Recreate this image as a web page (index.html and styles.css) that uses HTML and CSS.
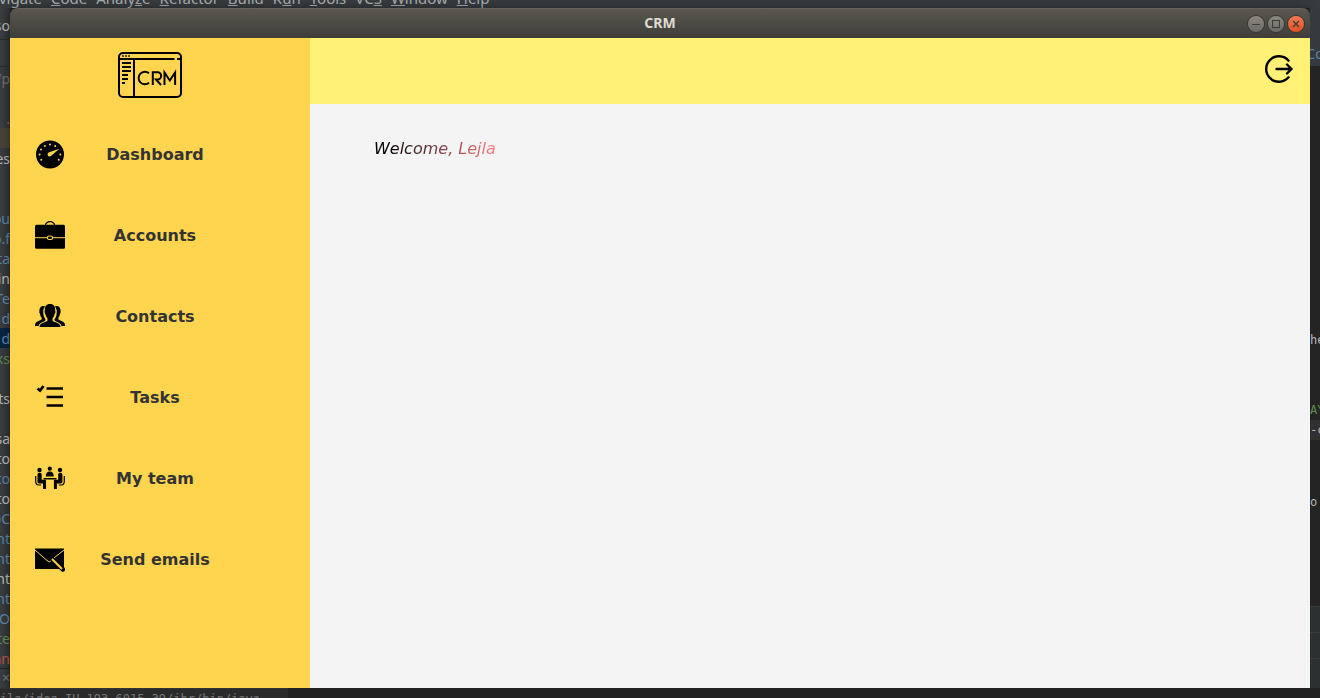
FILE: index.html
```html
<!DOCTYPE html>
<html lang="en">
<head>
<meta charset="utf-8">
<title>CRM</title>
<link rel="stylesheet" href="styles.css">
</head>
<body>
<div class="desktop">
  <div class="ide-menu">
    <span class="cut">Navigate</span><span><u>C</u>ode</span><span>Analy<u>z</u>e</span><span><u>R</u>efactor</span><span><u>B</u>uild</span><span>R<u>u</u>n</span><span><u>T</u>ools</span><span>VC<u>S</u></span><span><u>W</u>indow</span><span><u>H</u>elp</span>
  </div>
  <div class="ide-left">
    <div class="line top">so</div>
    <div class="line crumbs"></div>
    <div class="line path">/p</div>
    <div class="line"></div>
    <div class="line red">.</div>
    <div class="line marked"></div>
    <div class="line">es</div>
    <div class="line"></div>
    <div class="line"></div>
    <div class="line blue">ou</div>
    <div class="line blue">o.f</div>
    <div class="line blue">nta</div>
    <div class="line">in</div>
    <div class="line blue">Te</div>
    <div class="line blue">d</div>
    <div class="line blue selected">d</div>
    <div class="line green">ks</div>
    <div class="line"></div>
    <div class="line">ts</div>
    <div class="line"></div>
    <div class="line">sa</div>
    <div class="line">to</div>
    <div class="line blue">to</div>
    <div class="line">to</div>
    <div class="line blue">oC</div>
    <div class="line blue">nt</div>
    <div class="line blue">nt</div>
    <div class="line">nt</div>
    <div class="line blue">nt</div>
    <div class="line blue">O</div>
    <div class="line green">te</div>
    <div class="line red">nn</div>
    <div class="line close">×</div>
  </div>

  <div class="window">
    <header class="titlebar">
      <h1 class="title">CRM</h1>
      <div class="controls">
        <button class="control" type="button" aria-label="Minimize">
          <svg viewBox="0 0 16 16"><path d="M4 8.500h8" /></svg>
        </button>
        <button class="control" type="button" aria-label="Maximize">
          <svg viewBox="0 0 16 16"><rect x="4.500" y="4.500" width="7" height="7" /></svg>
        </button>
        <button class="control quit" type="button" aria-label="Close">
          <svg viewBox="0 0 16 16"><path d="M5 5l6 6m0-6l-6 6" stroke-width="1.400" /></svg>
        </button>
      </div>
    </header>
    <div class="app">
      <aside class="sidebar">
        <svg class="logo" viewBox="0 0 64 46" role="img" aria-label="CRM">
          <g fill="none" stroke="#000" stroke-width="2">
            <rect x="1" y="1" width="62" height="44" rx="4" />
            <path d="M1 7h55.500M59 7h4M16 7v38" />
            <path d="M4 11h9M4 15h9M4 19h9M4 23h6M4 27h6M4 31h3" />
            <path d="M4 4h2M7 4h2M10 4h2" stroke="#5c4d1c" />
            <path d="M31 21.200a6.300 6.300 0 1 0 0 9.600M34.800 33V20.200h4.700a3.600 3.600 0 0 1 0 7.300H38l5 5.500M46.500 33V20.500l5.300 8 5.300-8V33" />
          </g>
        </svg>
        <nav class="nav">
          <button class="nav-item" type="button">
            <svg class="icon" viewBox="0 0 30 30">
              <circle cx="15" cy="15.500" r="14" />
              <g class="cut-out">
                <path d="M24.500 9.800l-8.300 7a2.100 2.100 0 1 1-2-3.500z" />
                <circle cx="4.600" cy="15.500" r="1" /><circle cx="6" cy="10.500" r="1" /><circle cx="9.800" cy="6.900" r="1" />
                <circle cx="15" cy="5.400" r="1" /><circle cx="20.200" cy="6.900" r="1" /><circle cx="25.300" cy="15.500" r="1" />
                <circle cx="6.300" cy="20.700" r="1" /><circle cx="23.700" cy="20.700" r="1" />
              </g>
            </svg>
            <span class="label">Dashboard</span>
          </button>
          <button class="nav-item" type="button">
            <svg class="icon" viewBox="0 0 30 30">
              <path d="M10.500 5c0-1.500 2-3.300 4.500-3.300S19.500 3.500 19.500 5" fill="none" stroke="#000" stroke-width="1.300" />
              <rect y="4.700" width="30" height="24" rx="1.500" />
              <path class="cut-line" d="M0 17.700h12M18 17.700h12" />
              <rect class="cut-line" x="12.500" y="16" width="5" height="3.500" rx="1.500" stroke-width="1.200" />
            </svg>
            <span class="label">Accounts</span>
          </button>
          <button class="nav-item" type="button">
            <svg class="icon" viewBox="0 0 30 30">
              <path d="M10 5.500C7 4 4 6.500 4.500 10c-.4.500-.2 2 .4 2.500.4 2 .7 3 1.700 4v2L2.500 20.600C.5 21.600 0 22.500 0 25h3.500c.5-2.500 2-3 5.500-4.500 1-.5 1.500-1 1.500-2-1-1.500-2-3.500-2-5C7.800 10.500 8.200 7.500 10 5.500z" />
              <path d="M20 5.500c3-1.500 6 1 5.500 4.500.4.500.2 2-.4 2.500-.4 2-.7 3-1.700 4v2l4.100 2.100c2 1 2.500 1.900 2.500 4.400h-3.500c-.5-2.500-2-3-5.500-4.500-1-.5-1.500-1-1.500-2 1-1.500 2-3.500 2-5 .7-3 .3-6-1.500-8z" />
              <path d="M15 3c-3.700 0-5.600 2.500-5.100 6.500-.7.500-.3 3 .5 3.500.5 2 1.100 3.500 2.100 4.400v2.200C11.500 21.600 4.500 21.500 4.500 26h21c0-4.500-7-4.400-8-6.400v-2.200c1-1 1.600-2.400 2.100-4.400.8-.5 1.200-3 .5-3.500C20.600 5.500 18.700 3 15 3z" />
            </svg>
            <span class="label">Contacts</span>
          </button>
          <button class="nav-item" type="button">
            <svg class="icon" viewBox="0 0 30 30">
              <path d="M11.500 6.500H28M11.500 15H28M11.500 23.500H28" fill="none" stroke="#000" stroke-width="2.300" />
              <path d="M2.500 6.500l2.500 2L8.500 4" fill="none" stroke="#000" stroke-width="2.800" />
            </svg>
            <span class="label">Tasks</span>
          </button>
          <button class="nav-item" type="button">
            <svg class="icon" viewBox="0 -1 30 30">
              <circle cx="4.500" cy="6" r="2.200" /><circle cx="25" cy="6" r="2.200" /><circle cx="14.800" cy="4.700" r="2.100" />
              <path d="M10.800 12.500c0-3.300 1.500-4.900 4-4.900s4 1.600 4 4.900zM8.500 14h13v1.400H8.500z" />
              <path d="M2.500 10.500c0-2.500 4.200-2.500 4.200 0v5.200h3.100c.8 0 1.200.5 1.200 1.200v8H8v-5.500H4.500c-1.400 0-2-.8-2-2zM27.400 10.500c0-2.500-4.200-2.500-4.200 0v5.200h-3.100c-.8 0-1.200.5-1.200 1.200v8h3v-5.500h3.500c1.400 0 2-.8 2-2z" />
              <path d="M.7 12v5c0 2.500 1 4 3 4h2.500M29.300 12v5c0 2.500-1 4-3 4h-2.500" fill="none" stroke="#000" stroke-width="1.200" />
            </svg>
            <span class="label">My team</span>
          </button>
          <button class="nav-item" type="button">
            <svg class="icon" viewBox="0 0 30 30">
              <path d="M0 4.500h29V25H0z" />
              <path class="cut-line" d="M0 6l12 10.500q2.500 2.500 4.500 0l1-1M29 6L19 14" />
              <path d="M17.500 15.500L28 25.500" fill="none" stroke="#000" stroke-width="4.500" stroke-linecap="round" />
              <path d="M17 15l10 10" fill="none" stroke="#ffd54f" stroke-width="2" />
            </svg>
            <span class="label">Send emails</span>
          </button>
        </nav>
      </aside>
      <div class="content">
        <div class="topbar">
          <button class="logout" type="button" aria-label="Log out">
            <svg viewBox="0 0 30 30"><path d="M24.500 6.700A12.700 12.700 0 1 0 24.500 23.300M12.500 15H27.500M23 10.500l4.500 4.500-4.500 4.500" /></svg>
          </button>
        </div>
        <main class="main"><p class="welcome">Welcome, Lejla</p></main>
      </div>
    </div>
  </div>

  <div class="ide-right">
    <div class="tab">Co</div>
    <div class="code first"><b class="line">he</b></div>
    <div class="code second"><b class="line green">AY</b><b class="line current">-c</b></div>
    <div class="code third"><b class="line">o</b></div>
    <div class="panel"></div>
    <div class="panel"></div>
    <div class="panel last"></div>
  </div>
  <div class="ide-bottom"><span class="command">aila/idea-IU-193.6015.39/jbr/bin/java</span></div>
</div>
</body>
</html>
```

FILE: styles.css
```css
* {
  box-sizing: border-box;
}

body {
  margin: 0;
  font-family: "Noto Sans", sans-serif;
  background: #262626;
}

button {
  margin: 0;
  padding: 0;
  border: 0;
  background: none;
  font: inherit;
  color: inherit;
  cursor: pointer;
}

svg {
  display: block;
}

.desktop {
  display: grid;
  grid-template: 8px minmax(0, 1fr) 10px / 10px minmax(0, 1fr) 10px;
  height: 100vh;
  overflow: hidden;
}

.ide-menu {
  grid-column: 1 / -1;
  display: flex;
  align-items: flex-end;
  gap: 9px;
  padding-bottom: 1px;
  overflow: hidden;
  background: #373b3d;
  color: #a9adaf;
  font-size: 15px;
  line-height: 18px;
}

.ide-menu .cut {
  display: flex;
  justify-content: flex-end;
  width: 42px;
}

.ide-left,
.ide-right {
  overflow: hidden;
  background: #37393b;
  color: #b4b6b8;
  font-size: 14px;
}

.ide-left {
  background: linear-gradient(to right, #3a3e40, #303234);
}

.line {
  display: flex;
  justify-content: flex-end;
  height: 20px;
  line-height: 22px;
  font-weight: 400;
  white-space: nowrap;
}

.top {
  height: 32px;
  line-height: 36px;
  border-bottom: 1px solid #292b2c;
}

.crumbs {
  height: 27px;
  border-bottom: 1px solid #292b2c;
}

.path {
  height: 21px;
  line-height: 24px;
  color: #6b6d6f;
}

.blue {
  color: #5884ac;
}

.green {
  color: #5f8a50;
}

.red {
  color: #b5554c;
}

.marked {
  background: #46423a;
}

.selected {
  background: #0a2540;
}

.close {
  color: #727678;
  line-height: 18px;
  border-top: 1px solid #222;
}

.window {
  display: flex;
  flex-direction: column;
  box-shadow: 0 0 8px rgba(0, 0, 0, 0.4);
  border-radius: 8px 8px 0 0;
}

.titlebar {
  display: grid;
  grid-template-columns: 1fr auto 1fr;
  align-items: center;
  height: 30px;
  padding: 0 6px;
  border-top: 1px solid #65645a;
  border-radius: 8px 8px 0 0;
  background: linear-gradient(#59574f, #3e3d39);
}

.title {
  grid-column: 2;
  margin: 0;
  padding-bottom: 2px;
  color: #dfdbd2;
  font-size: 14px;
  line-height: 20px;
}

.controls {
  display: flex;
  justify-content: flex-end;
  gap: 4px;
}

.control {
  width: 16px;
  height: 16px;
  border-radius: 50%;
  background: linear-gradient(#8a8880, #6b6963);
  box-shadow: 0 0 0 1px #383733;
}

.control svg {
  fill: none;
  stroke: #3a3935;
}

.quit {
  background: linear-gradient(#f57b55, #e2501f);
}

.app {
  flex: 1;
  display: flex;
  min-height: 0;
}

.sidebar {
  width: 300px;
  flex-shrink: 0;
  padding-top: 14px;
  background: #ffd54f;
}

.logo {
  width: 64px;
  height: 46px;
  margin: 0 auto 16px 108px;
}

.nav {
  display: flex;
  flex-direction: column;
}

.nav-item {
  display: flex;
  align-items: center;
  height: 81px;
  padding-left: 25px;
}

.icon {
  width: 30px;
  height: 30px;
  margin-bottom: 2px;
}

.cut-out {
  fill: #ffd54f;
}

.cut-line {
  fill: none;
  stroke: #ffd54f;
}

.label {
  width: 180px;
  color: #333;
  font: bold 16px/20px "DejaVu Sans", sans-serif;
  text-align: center;
}

.content {
  flex: 1;
  display: flex;
  flex-direction: column;
  min-width: 0;
}

.topbar {
  display: flex;
  align-items: center;
  justify-content: flex-end;
  height: 66px;
  padding: 0 16px 4px 0;
  background: #fff176;
}

.logout svg {
  width: 30px;
  height: 30px;
  fill: none;
  stroke: #000;
  stroke-width: 2.4;
  stroke-linecap: round;
  stroke-linejoin: round;
}

.main {
  flex: 1;
  padding: 35px 64px;
  background: #f4f4f4;
}

.welcome {
  width: fit-content;
  margin: 0;
  font: italic 16px/20px "DejaVu Sans", sans-serif;
  color: transparent;
  background: linear-gradient(to right, #000 10%, #ff7f88);
  background-clip: text;
  -webkit-background-clip: text;
}

.ide-right {
  display: flex;
  flex-direction: column;
  background: #242424;
}

.ide-right .line {
  justify-content: flex-start;
  font-family: "DejaVu Sans Mono", monospace;
  font-size: 12px;
  line-height: 20px;
}

.tab {
  display: flex;
  justify-content: center;
  height: 58px;
  padding-top: 36px;
  background: #343a3d;
  color: #5884ac;
  line-height: 20px;
}

.code {
  display: flex;
  flex-direction: column;
  justify-content: flex-end;
}

.first {
  height: 284px;
}

.second {
  height: 90px;
}

.third {
  height: 72px;
}

.current {
  background: #303030;
}

.panel {
  height: 26px;
  border-top: 1px solid #383a3b;
  background: #2d3031;
}

.third + .panel {
  margin-top: 94px;
}

.last {
  flex: 1;
}

.ide-bottom {
  grid-column: 1 / -1;
  overflow: hidden;
  background: #222;
}

.command {
  display: flex;
  justify-content: flex-end;
  width: 288px;
  padding: 3px 28px 0 0;
  border-top: 1px solid #333;
  background: #2b2b2b;
  color: #777;
  font: 12px/14px "DejaVu Sans Mono", monospace;
  white-space: nowrap;
}
```
